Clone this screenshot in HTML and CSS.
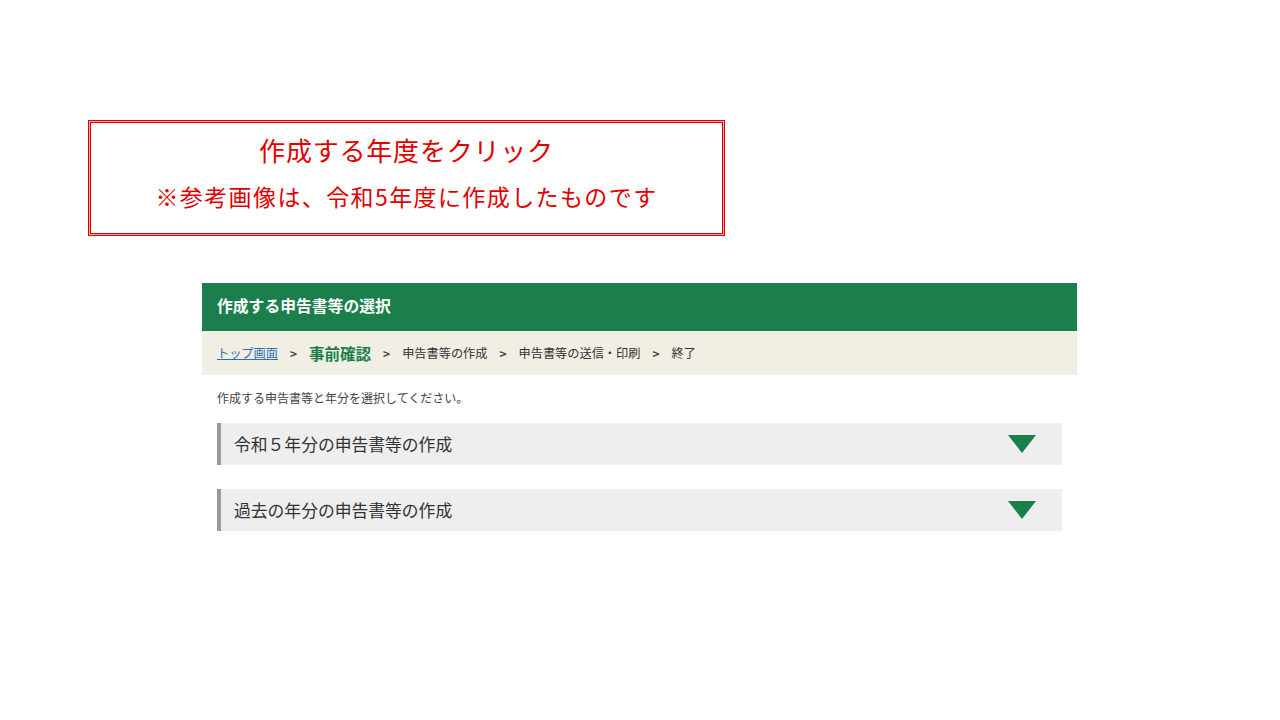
FILE: index.html
```html
<!DOCTYPE html>
<html lang="ja">
<head>
  <meta charset="UTF-8" />
  <title>作成する申告書等の選択</title>
  <link rel="stylesheet" href="styles.css">
</head>
<body>
  <div class="notice">
    <p class="notice-main">作成する年度をクリック</p>
    <p class="notice-sub">※参考画像は、令和5年度に作成したものです</p>
  </div>

  <div class="panel">
    <div class="panel-head">作成する申告書等の選択</div>

    <div class="crumbs">
      <a href="#" class="crumb-link">トップ画面</a>
      <span class="sep">&gt;</span>
      <span class="crumb-current">事前確認</span>
      <span class="sep">&gt;</span>
      <span>申告書等の作成</span>
      <span class="sep">&gt;</span>
      <span>申告書等の送信・印刷</span>
      <span class="sep">&gt;</span>
      <span>終了</span>
    </div>

    <div class="panel-body">
      <p class="lead">作成する申告書等と年分を選択してください。</p>

      <div class="accordion">
        <span>令和５年分の申告書等の作成</span>
        <span class="arrow"></span>
      </div>

      <div class="accordion">
        <span>過去の年分の申告書等の作成</span>
        <span class="arrow"></span>
      </div>
    </div>
  </div>
</body>
</html>
```

FILE: styles.css
```css
body {
  margin: 0;
  padding: 0;
  background: #fff;
  color: #333;
  font-family: "Noto Sans CJK JP", "Noto Sans", sans-serif;
}

p {
  margin: 0;
}

.notice {
  box-sizing: border-box;
  width: 637px;
  height: 116px;
  margin: 120px 0 0 88px;
  border: 1px solid #e00000;
  box-shadow: inset 0 0 0 1px #f6a8a8, inset 0 0 0 2px #e00000;
  text-align: center;
  color: #e00000;
}

.notice-main {
  margin-top: 11px;
  font-size: 26px;
  line-height: 36px;
  letter-spacing: 0.8px;
}

.notice-sub {
  margin-top: 11px;
  font-size: 23px;
  line-height: 34px;
  letter-spacing: 1.4px;
}

.panel {
  width: 875px;
  margin: 47px 0 0 202px;
}

.panel-head {
  height: 48px;
  padding-left: 15px;
  background: #1a7f4b;
  color: #fff;
  font-size: 15.8px;
  font-weight: bold;
  line-height: 46px;
}

.crumbs {
  display: flex;
  align-items: center;
  height: 44px;
  padding-left: 15px;
  background: #f1eee4;
  font-size: 12.2px;
  color: #333;
}

.crumb-link {
  color: #2a6fb0;
  text-decoration: underline;
}

.crumb-current {
  color: #1a7f4b;
  font-size: 15.5px;
  font-weight: bold;
}

.sep {
  margin: 0 12px;
  font-weight: bold;
  font-size: 12px;
  color: #444;
}

.panel-body {
  padding: 14px 15px 0;
}

.lead {
  font-size: 12px;
  line-height: 18px;
  color: #444;
}

.accordion {
  display: flex;
  justify-content: space-between;
  align-items: center;
  height: 42px;
  margin-top: 16px;
  padding: 0 26px 0 13px;
  background: #eeeeee;
  border-left: 4px solid #9a9a9a;
  font-size: 16.8px;
  color: #333;
}

.accordion + .accordion {
  margin-top: 24px;
}

.arrow {
  width: 0;
  height: 0;
  border-left: 14px solid transparent;
  border-right: 14px solid transparent;
  border-top: 18px solid #1a7f4b;
}
```
